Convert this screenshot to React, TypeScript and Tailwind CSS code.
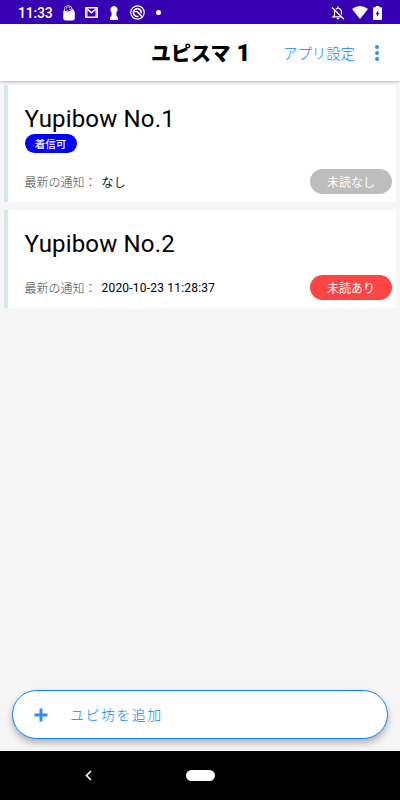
import React from 'react';

const FONT = "font-[Roboto,'Noto_Sans_CJK_JP',sans-serif]";

function StatusBar() {
  return (
    <header className="flex h-6 shrink-0 items-center bg-[#3700b3] text-white">
      <span className="ml-[18px] w-[43px] pt-[2px] text-[14px] leading-none font-medium tracking-[-0.200px]">11:33</span>
      <svg className="mt-[1px] ml-[1px]" width="14" height="16" viewBox="0 0 14 16">
        <path d="M2 5C2 1.500 4 .5 6.300 .5S10 1.500 10.500 4C12.500 5 13 7 12.800 10V13Q12.800 15.500 10 15.500H4Q1.200 15.500 1.200 13V9Q1 6.500 2 5Z" fill="#fff" />
        <path d="M2.500 2.500Q5 .5 9 2L9.500 5Q6.500 7.500 2.800 5.500Z" fill="#3700b3" />
        <path d="M3.500 3.700L5.500 2.500M6.500 2.200L8 3M4.500 5L6 5.500M7 4.800L8.800 4.300" stroke="#bdb0ef" strokeWidth="1" />
      </svg>
      <svg className="mt-[1px] ml-[9px]" width="13" height="11" viewBox="0 0 13 11" fill="none" stroke="#fff">
        <rect x=".75" y=".75" width="11.500" height="9.500" rx=".5" strokeWidth="1.500" />
        <path d="M1 1L6.500 5.800L12 1" strokeWidth="1.600" />
        <path d="M2 2V10M11 2V10" strokeWidth="1" />
      </svg>
      <svg className="mt-[1px] ml-[12px]" width="8" height="14" viewBox="0 0 8 14">
        <path d="M4 0A3.700 3.700 0 0 1 6.300 6.500L6.600 10L8 11.500V14H0V11.500L1.400 10L1.700 6.500A3.700 3.700 0 0 1 4 0Z" fill="#fff" />
      </svg>
      <svg className="mt-[1px] ml-[12px]" width="15" height="15" viewBox="0 0 15 15" fill="none" stroke="#fff">
        <circle cx="7.500" cy="7.500" r="6.700" strokeWidth="1.200" />
        <path d="M8.500 11.300A3.900 3.900 0 1 1 11.200 8.300" strokeWidth="1.700" />
        <path d="M5 7Q7 5.600 8.300 7.800L11.800 11.500" strokeWidth="1.500" />
      </svg>
      <span className="mt-[1px] ml-[11px] size-[5px] rounded-full bg-white" />
      <svg className="mt-[1px] ml-auto" width="14" height="14" viewBox="0 0 14 14" fill="none" stroke="#fff" strokeWidth="1.200">
        <path d="M4.800 3.200Q7 1.300 9.300 3.200Q10.500 4.200 10.500 6.500V8.500M3.500 4.800V9.500L2 10.800H10.200" />
        <path d="M1 1.500L13 13.300M7 .5V2M5.800 12.700H8.200" />
      </svg>
      <svg className="mt-[1px] ml-[7px]" width="16" height="13" viewBox="0 0 16 13">
        <path d="M0 3Q8-3 16 3L8 13Z" fill="#fff" />
      </svg>
      <svg className="mt-[1px] mr-[18px] ml-[5px]" width="9" height="14" viewBox="0 0 9 14">
        <path d="M2.700 1.300V0H6.300V1.300H8Q9 1.300 9 2.300V13Q9 14 8 14H1Q0 14 0 13V2.300Q0 1.300 1 1.300Z" fill="#fff" />
        <path d="M5.200 4.500L2.500 8.200H4V10.800L6.500 7.200H5.200Z" fill="#3700b3" />
      </svg>
    </header>
  );
}

function AppBar() {
  return (
    <div className="z-10 flex h-[57px] shrink-0 items-center bg-white shadow-[0_1px_3px_rgba(0,0,0,0.25)]">
      <h1 className="ml-[151px] w-[132px] whitespace-nowrap text-[20px] leading-none font-black text-black">
        ユピスマ<span className="ml-[6px] text-[24px]">1</span>
      </h1>
      <button className="whitespace-nowrap pt-[5px] text-[14.400px] leading-none font-light text-[#0a84ff]">アプリ設定</button>
      <button aria-label="メニュー" className="mr-[21px] ml-auto flex flex-col gap-[2px]">
        <span className="size-[4px] rounded-full bg-[#2196f3]" />
        <span className="size-[4px] rounded-full bg-[#2196f3]" />
        <span className="size-[4px] rounded-full bg-[#2196f3]" />
      </button>
    </div>
  );
}

type DeviceProps = { name: string; callable?: boolean; latest: string; unread: boolean };

function DeviceCard({ name, callable, latest, unread }: DeviceProps) {
  return (
    <article
      className={`flex flex-col border-l-4 border-[#d0eaf0] bg-white pr-1 pl-[16.500px] ${callable ? 'h-[117px]' : 'h-[98px]'}`}
    >
      <h2 className="mt-[20px] text-[24px] leading-[28px] tracking-[0.170px] text-black">{name}</h2>
      {callable && (
        <span className="mt-[1px] flex h-[19px] w-[52px] items-center justify-center rounded-full bg-[#0000ff] pt-[3px] text-[10.500px] leading-none font-medium text-white">
          着信可
        </span>
      )}
      <div className="mt-auto mb-[8px] flex h-[25px] items-center text-[12px] leading-none">
        <span className="w-[77px] whitespace-nowrap pt-[3px] font-light text-[#444]">最新の通知：</span>
        <span className={`whitespace-nowrap tracking-[0.200px] text-black ${unread ? 'pt-[1px]' : 'pt-[3px] font-[350]'}`}>{latest}</span>
        <span
          className={`ml-auto flex h-[25px] w-[82px] items-center justify-center rounded-full pt-[3px] text-white ${unread ? 'bg-[#ff4444]' : 'bg-[#bdbdbd]'}`}
        >
          {unread ? '未読あり' : '未読なし'}
        </span>
      </div>
    </article>
  );
}

export default function App() {
  return (
    <div className={`flex h-[800px] w-[400px] flex-col overflow-hidden bg-[#f6f6f6] ${FONT}`}>
      <StatusBar />
      <AppBar />
      <main className="flex flex-1 flex-col gap-2 px-1 pt-1">
        <DeviceCard name="Yupibow No.1" callable latest="なし" unread={false} />
        <DeviceCard name="Yupibow No.2" latest="2020-10-23 11:28:37" unread />
        <button className="mx-2 mt-auto mb-3 flex h-[49px] items-center rounded-full border border-[#0a84f5] bg-white pl-[21px] text-left shadow-[0_4px_7px_rgba(0,0,0,0.28)]">
          <svg width="14" height="14" viewBox="0 0 14 14">
            <path d="M7 .5V13.500M.5 7H13.500" stroke="#2f90ee" strokeWidth="3" />
          </svg>
          <span className="ml-[22px] text-[14px] leading-none font-light tracking-[1.450px] text-[#0a84ff]">ユピ坊を追加</span>
        </button>
      </main>
      <nav className="flex h-[49px] shrink-0 items-center bg-black">
        <svg className="ml-[85px]" width="7" height="11" viewBox="0 0 7 11">
          <path d="M6 1L1.500 5.500L6 10" fill="none" stroke="#fff" strokeWidth="1.600" />
        </svg>
        <span className="ml-[94px] h-[11px] w-[29px] rounded-full bg-white" />
      </nav>
    </div>
  );
}
